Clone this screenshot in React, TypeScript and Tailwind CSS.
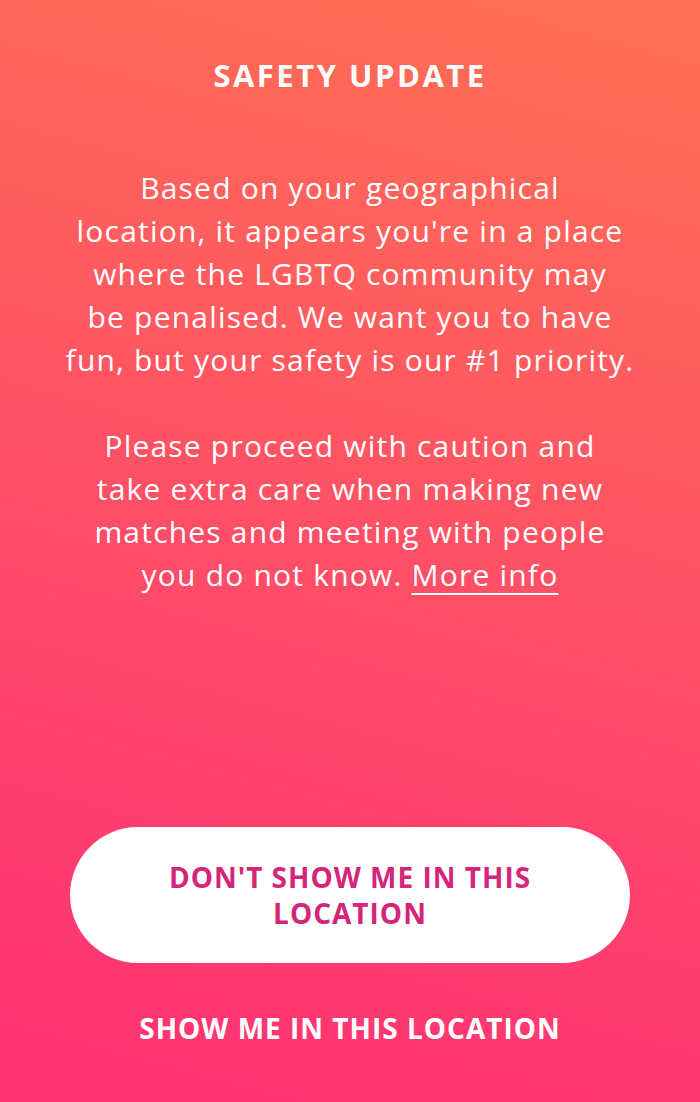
export default function App() {
    return (
        <main
            className="flex h-[1102px] w-[700px] flex-col items-center bg-[linear-gradient(195deg,#ff7054_0%,#ff5a60_35%,#ff446c_65%,#ff3074_100%)] pt-[59px] text-white"
            style={{ fontFamily: "'Open Sans', Lato, sans-serif" }}
        >
            {/* title */}
            <h1 className="h-[32px] text-[31px] font-bold leading-[32px] tracking-[2.5px]">SAFETY UPDATE</h1>

            {/* message */}
            <div className="mt-[75px] w-[680px] text-center text-[30px] leading-[43px] tracking-[1.2px]">
                <p>
                    Based on your geographical
                    <br />
                    location, it appears you&apos;re in a place
                    <br />
                    where the LGBTQ community may
                    <br />
                    be penalised. We want you to have
                    <br />
                    fun, but your safety is our #1 priority.
                </p>
                <p className="mt-[43px]">
                    Please proceed with caution and
                    <br />
                    take extra care when making new
                    <br />
                    matches and meeting with people
                    <br />
                    you do not know.{" "}
                    <a href="#" className="underline decoration-[1.5px] underline-offset-[7px]">
                        More info
                    </a>
                </p>
            </div>

            {/* actions */}
            <button className="mt-[231px] flex h-[136px] w-[560px] items-center justify-center rounded-full bg-white px-[70px] text-[28px] font-bold leading-[36px] tracking-[1px] text-[#d4257a]">
                DON&apos;T SHOW ME IN THIS LOCATION
            </button>
            <button className="mt-[49px] h-[32px] text-[28px] font-bold leading-[32px] tracking-[1px]">
                SHOW ME IN THIS LOCATION
            </button>
        </main>
    );
}
